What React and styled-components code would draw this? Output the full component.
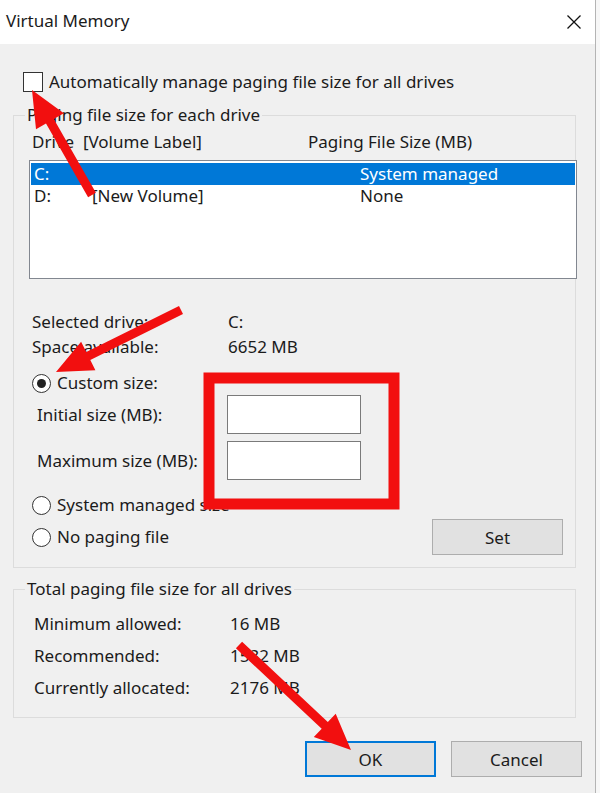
import React from 'react';
import styled, { createGlobalStyle } from 'styled-components';

const GlobalStyle = createGlobalStyle`
  html, body {
    margin: 0;
    padding: 0;
    background: #f7f7f7;
  }
  body {
    font-family: "Noto Sans", "Open Sans", sans-serif;
    color: #1b1b1b;
  }
`;

const Window = styled.div`
  position: relative;
  width: 595px;
  height: 793px;
  border-right: 1px solid #b4b4b4;
  background: #f0f0f0;
  font-size: 17px;
  overflow: hidden;
`;

const TitleBar = styled.div`
  height: 44px;
  background: #fff;
  display: flex;
  align-items: center;
  justify-content: space-between;
  padding: 0 14px 0 6px;
`;

const Title = styled.div`
  font-size: 17px;
  margin-top: -3px;
`;

const Body = styled.div`
  padding: 27px 13px 0 13px;
`;

const CheckRow = styled.label`
  display: flex;
  align-items: center;
  gap: 6px;
  margin-left: 10px;
  line-height: 22px;
`;

const CheckBox = styled.span`
  width: 18px;
  height: 18px;
  border: 1px solid #333;
  background: #fff;
`;

const Group = styled.fieldset`
  margin: ${(p) => p.$top}px 6px 0 0;
  padding: 0 0 ${(p) => p.$bottom}px 0;
  border: 1px solid #dcdcdc;
  min-width: 0;
`;

const Legend = styled.legend`
  margin-left: 11px;
  padding: 0 2px;
  line-height: 22px;
`;

const HeaderRow = styled.div`
  display: grid;
  grid-template-columns: 276px 1fr;
  margin: 5px 0 0 18px;
  line-height: 22px;
`;

const ListBox = styled.div`
  margin: 7px -2px 0 15px;
  border: 1px solid #828790;
  background: #fff;
  padding-top: 2px;
  box-sizing: border-box;
  height: 119px;
`;

const ListRow = styled.div`
  display: grid;
  grid-template-columns: 58px 268px 1fr;
  height: 22px;
  line-height: 22px;
  margin: 0 1px;
  padding-left: 3px;
  background: ${(p) => (p.$selected ? '#0078d7' : 'transparent')};
  color: ${(p) => (p.$selected ? '#fff' : 'inherit')};
`;

const InfoList = styled.div`
  margin: 30px 0 0 18px;
`;

const InfoRow = styled.div`
  display: grid;
  grid-template-columns: ${(p) => p.$label}px 1fr;
  line-height: ${(p) => p.$height}px;
`;

const RadioRow = styled.div`
  display: flex;
  align-items: center;
  gap: 6px;
  margin: ${(p) => p.$top}px 0 0 ${(p) => p.$left ?? 18}px;
  line-height: 22px;
`;

const Radio = styled.span`
  width: 17px;
  height: 17px;
  border-radius: 50%;
  border: 1px solid #333;
  background: #fff;
  display: flex;
  align-items: center;
  justify-content: center;
  &::after {
    content: '';
    width: 9px;
    height: 9px;
    border-radius: 50%;
    background: ${(p) => (p.$checked ? '#222' : 'transparent')};
  }
`;

const SizeRow = styled.div`
  display: grid;
  grid-template-columns: 190px 134px;
  align-items: center;
  margin: ${(p) => p.$top}px 0 0 23px;
`;

const TextBox = styled.input`
  width: 134px;
  height: 39px;
  box-sizing: border-box;
  border: 1px solid #7a7a7a;
  background: #fff;
  margin: 0;
  outline: none;
`;

const BottomRow = styled.div`
  display: flex;
  align-items: center;
  justify-content: space-between;
  margin: 3px 12px 0 18px;
`;

const Button = styled.button`
  width: 131px;
  height: 36px;
  font-family: inherit;
  font-size: 17px;
  color: #1b1b1b;
  background: #e1e1e1;
  border: ${(p) => (p.$default ? '2px solid #0078d7' : '1px solid #adadad')};
  padding: 0;
`;

const TotalList = styled.div`
  margin: 8px 0 0 20px;
`;

const Buttons = styled.div`
  display: flex;
  justify-content: flex-end;
  gap: 15px;
  margin-top: 23px;
`;

const Overlay = styled.svg`
  position: absolute;
  left: 0;
  top: 0;
  pointer-events: none;
`;

const CloseIcon = () => (
  <svg width="14" height="14" viewBox="0 0 14 14">
    <path d="M0.5 0.5 L13.5 13.5 M13.5 0.5 L0.5 13.5" stroke="#111" strokeWidth="1.3" fill="none" />
  </svg>
);

// arrow polygon from tail to tip
const arrowPoints = ([x1, y1], [x2, y2], shaft, headLen, headW) => {
  const dx = x2 - x1;
  const dy = y2 - y1;
  const len = Math.hypot(dx, dy);
  const ux = dx / len;
  const uy = dy / len;
  const nx = -uy;
  const ny = ux;
  const bx = x2 - ux * headLen;
  const by = y2 - uy * headLen;
  const pts = [
    [x1 + nx * shaft / 2, y1 + ny * shaft / 2],
    [bx + nx * shaft / 2, by + ny * shaft / 2],
    [bx + nx * headW / 2, by + ny * headW / 2],
    [x2, y2],
    [bx - nx * headW / 2, by - ny * headW / 2],
    [bx - nx * shaft / 2, by - ny * shaft / 2],
    [x1 - nx * shaft / 2, y1 - ny * shaft / 2],
  ];
  return pts.map((p) => p.map((v) => v.toFixed(1)).join(',')).join(' ');
};

const arrows = [
  { from: [92, 195], to: [32, 90] },
  { from: [181, 310], to: [56, 372] },
  { from: [239, 645], to: [351, 750] },
];

const drives = [
  { drive: 'C:', label: '', size: 'System managed', selected: true },
  { drive: 'D:', label: '[New Volume]', size: 'None' },
];

const totals = [
  ['Minimum allowed:', '16 MB'],
  ['Recommended:', '1532 MB'],
  ['Currently allocated:', '2176 MB'],
];

const App = () => (
  <Window>
    <GlobalStyle />
    <TitleBar>
      <Title>Virtual Memory</Title>
      <CloseIcon />
    </TitleBar>
    <Body>
      <CheckRow>
        <CheckBox />
        Automatically manage paging file size for all drives
      </CheckRow>

      <Group $top={11} $bottom={12}>
        <Legend>Paging file size for each drive</Legend>
        <HeaderRow>
          <span>Drive&nbsp; [Volume Label]</span>
          <span>Paging File Size (MB)</span>
        </HeaderRow>
        <ListBox>
          {drives.map((d) => (
            <ListRow key={d.drive} $selected={d.selected}>
              <span>{d.drive}</span>
              <span>{d.label}</span>
              <span>{d.size}</span>
            </ListRow>
          ))}
        </ListBox>

        <InfoList>
          <InfoRow $label={196} $height={25}>
            <span>Selected drive:</span>
            <span>C:</span>
          </InfoRow>
          <InfoRow $label={196} $height={25}>
            <span>Space available:</span>
            <span>6652 MB</span>
          </InfoRow>
        </InfoList>

        <RadioRow $top={13}>
          <Radio $checked />
          Custom size:
        </RadioRow>
        <SizeRow $top={1}>
          <span>Initial size (MB):</span>
          <TextBox />
        </SizeRow>
        <SizeRow $top={7}>
          <span>Maximum size (MB):</span>
          <TextBox />
        </SizeRow>
        <RadioRow $top={14}>
          <Radio />
          System managed size
        </RadioRow>
        <BottomRow>
          <RadioRow $top={0} $left={0}>
            <Radio />
            No paging file
          </RadioRow>
          <Button>Set</Button>
        </BottomRow>
      </Group>

      <Group $top={10} $bottom={13}>
        <Legend>Total paging file size for all drives</Legend>
        <TotalList>
          {totals.map(([label, value]) => (
            <InfoRow key={label} $label={196} $height={32}>
              <span>{label}</span>
              <span>{value}</span>
            </InfoRow>
          ))}
        </TotalList>
      </Group>

      <Buttons>
        <Button $default>OK</Button>
        <Button>Cancel</Button>
      </Buttons>
    </Body>

    <Overlay width="600" height="793" viewBox="0 0 600 793">
      <rect x="209" y="378" width="185" height="126" fill="none" stroke="#f20f0f" strokeWidth="11" />
      {arrows.map((a, i) => (
        <polygon key={i} points={arrowPoints(a.from, a.to, 9, 36, 32)} fill="#f20f0f" />
      ))}
    </Overlay>
  </Window>
);

export default App;
